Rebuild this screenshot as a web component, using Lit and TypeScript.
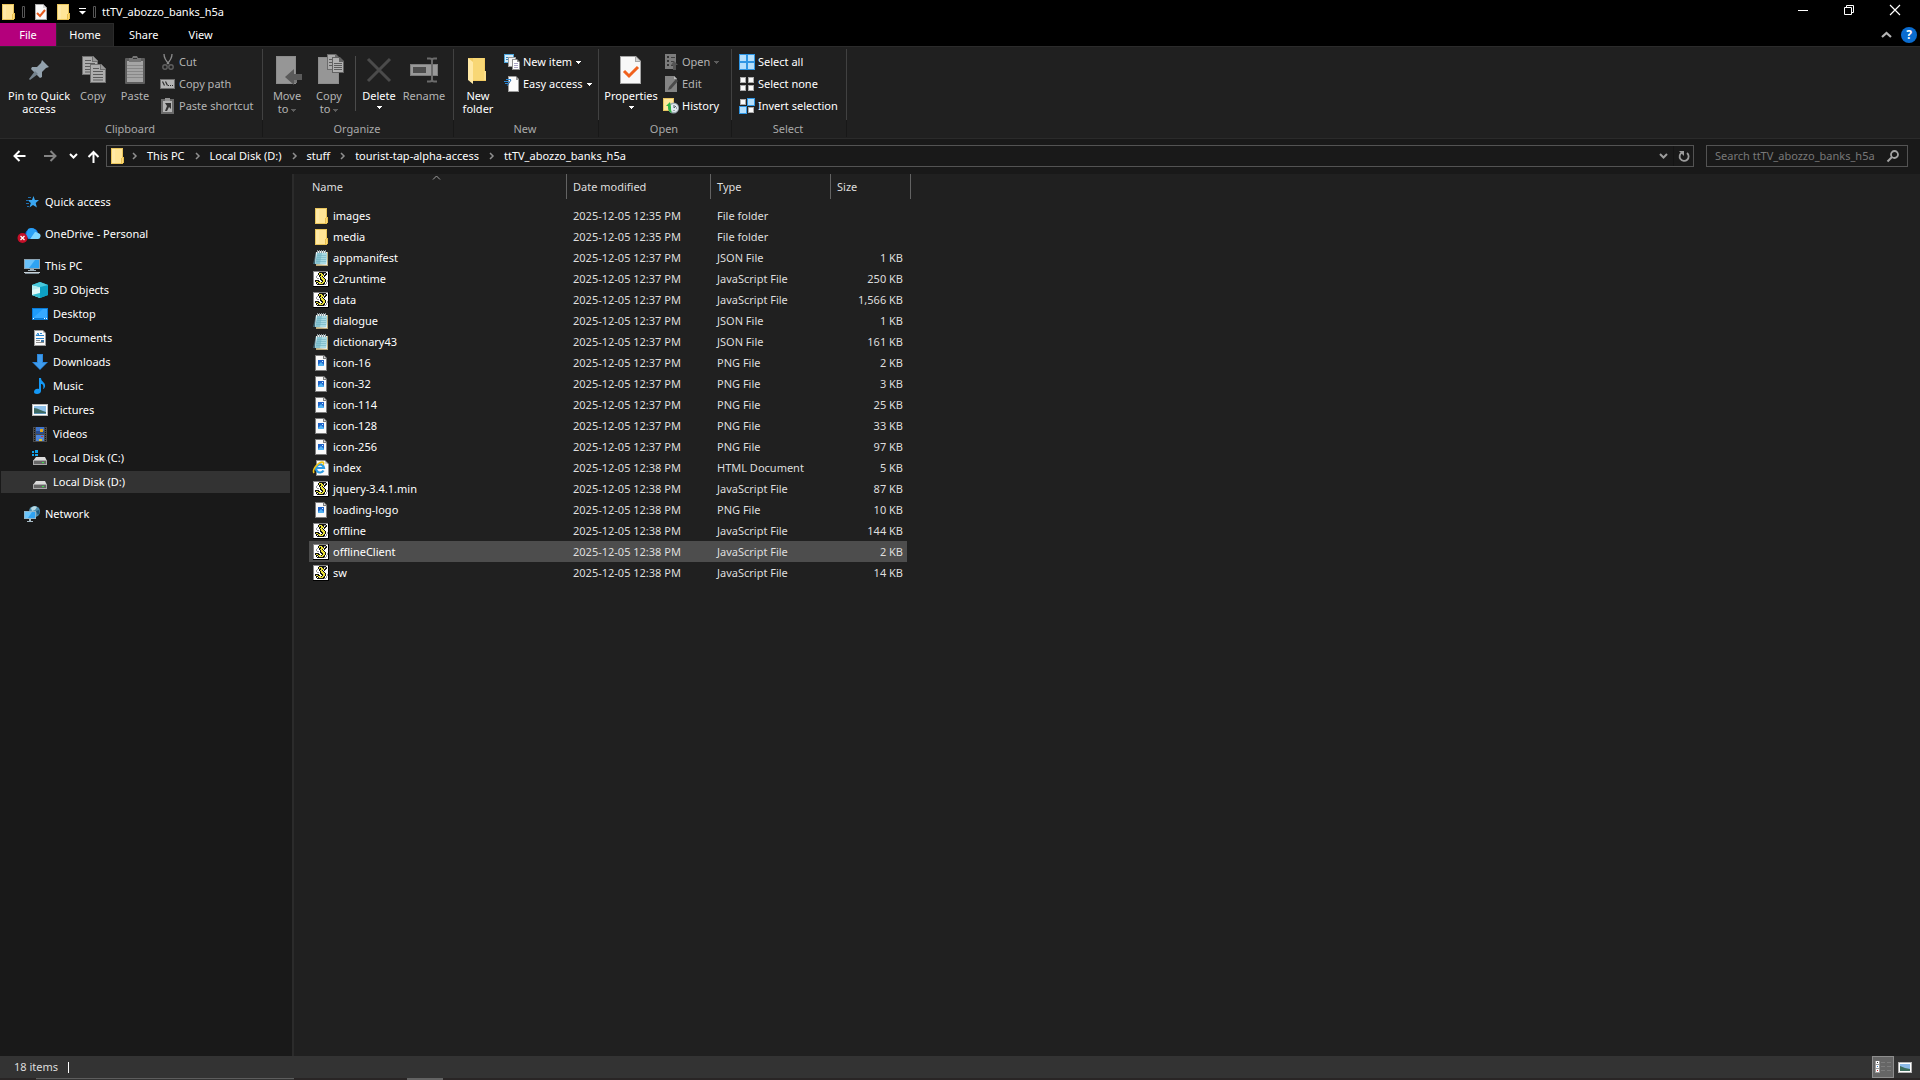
import { LitElement, html, css, svg, nothing, type TemplateResult } from "lit";
import { customElement, state } from "lit/decorators.js";
import { classMap } from "lit/directives/class-map.js";

type Shape = ReturnType<typeof svg>;

const pic = (w: number, h: number, body: Shape) =>
  html`<svg class="pic" width=${w} height=${h} viewBox="0 0 ${w} ${h}" aria-hidden="true">${body}</svg>`;

/* ---------- 16px icons ---------- */

const folder = () => pic(16, 16, svg`
  <rect x="2" y="0" width="12" height="16" fill="#e9c55c"/>
  <rect x="3" y="1" width="10" height="14" fill="#ffe597"/>
  <rect x="3" y="1" width="3" height="14" fill="#ffe9a6"/>
  <path d="M12 10h1v-1h2v6h-1v1h-2z" fill="#e9c04f"/>
  <rect x="13" y="10" width="1" height="5" fill="#fbd978"/>`);

const docCheck = () => pic(16, 16, svg`
  <path d="M2 0h8l4 4v12H2z" fill="#a8a8a8"/>
  <path d="M3 1h7v3h3v11H3z" fill="#f9f9f9"/>
  <path d="M10 0v4h4z" fill="#d5d5d5"/>
  <path d="M4 9l3 3 5-6" fill="none" stroke="#e65a1c" stroke-width="2"/>`);

const notepad = () => pic(16, 16, svg`
  <path d="M3 2L0 14h4z" fill="#3b5e6a"/>
  <path d="M3 2h12v14H3l0-1z" fill="#b9a878"/>
  <path d="M3 2h11v13L2 14z" fill="#e9f4f5"/>
  <path d="M4 3h10l-1 11H2z" fill="#86c3d1"/>
  <path d="M9 3h5l-1 11H7z" fill="#a9dbe4"/>
  <path d="M4 5.500h9M4 7.500h9M3 9.500h10M3 11.500h10" stroke="#6fb2c2" stroke-width="1" opacity=".6"/>
  <path d="M4.500 0v3M6.500 0v3M8.500 0v3M10.500 0v3M12.500 0v3" stroke="#8d9a9e" stroke-width="1"/>
  <path d="M5.500 1v2M7.500 1v2M9.500 1v2M11.500 1v2" stroke="#e5edee" stroke-width="1"/>`);

/* Pixel rows of the script scroll: k black, y yellow, g grey. */
const SCROLL = [
  ".....kkkkkkk..",
  "....kyyykkggk.",
  "....kykyyk.kk.",
  "...g.kkyyykk..",
  "..g..kyyk.k...",
  "..g...kyyk....",
  "...gg.kyyyk...",
  "......kkyyyk..",
  ".kkkk..kkyyk.g",
  ".kyykk..kyyk.g",
  "..kkyyykyyk.g.",
  "..k.kyyyykk.g.",
  "...kkkkkkkgg..",
];
const INK: Record<string, string> = { k: "#111", y: "#e8df3a", g: "#9a9a9a" };
const script = () => pic(16, 16, svg`
  <rect width="16" height="16" fill="#000"/>
  <rect width="15" height="15" fill="#868686"/>
  <rect x="1" y="1" width="14" height="14" fill="#fff"/>
  ${SCROLL.map((row, y) => [...row].map((c, x) => INK[c]
    ? svg`<rect x=${x + 1} y=${y + 1} width="1" height="1" fill=${INK[c]}/>` : nothing))}`);

const image = () => pic(16, 16, svg`
  <path d="M2 0h9l3 3v13H2z" fill="#7c7c7c"/>
  <path d="M3 1h7v3h3v11H3z" fill="#fafafa"/>
  <path d="M11 1v2h2z" fill="#dcdcdc"/>
  <rect x="5" y="5" width="6" height="6" fill="#1d63c9"/>
  <path d="M5 10l3-3 3 3v1H5z" fill="#4fb0f0"/>
  <rect x="9" y="6" width="1" height="1" fill="#d5ecff"/>`);

const browser = () => pic(16, 16, svg`
  <path d="M3 0h9l4 4v12H3z" fill="#8a8a8a"/>
  <path d="M4 1h8v3h3v11H4z" fill="#fafafa"/>
  <path d="M12 1v3h3z" fill="#cfcfcf"/>
  <path d="M10.500 10.500A4 4 0 1 1 11 8H4" fill="none" stroke="#2b9be4" stroke-width="2.200"/>
  <path d="M1 13C-1 10 4 3 9 2c2 0 2 1 1 3" fill="none" stroke="#f0c419" stroke-width="1.600"/>`);

const star = () => pic(16, 16, svg`
  <path d="M9.500 2l1.400 4h4.100l-3.300 3 1.200 4.500-3.900-2.500L5.500 13.500l1.300-4.500L3.500 6H8z" fill="#3aa7f2"/>
  <path d="M4 3.500h3M2 6.500h3M2 9.500h3M3 12.500h2" stroke="#1f6fae" stroke-width="1"/>`);

const cloud = () => pic(22, 16, svg`
  <path d="M9 11a4 4 0 0 1 1-7 6 6 0 0 1 10 3 4 4 0 0 1 0 6H10z" fill="#1469d8"/>
  <path d="M10 3a6 6 0 0 1 9 3l-8 7-3-4z" fill="#2aa0f5"/>
  <path d="M12 13l5-7a4 4 0 0 1 3 1 3 3 0 0 1-1 6z" fill="#7fd6ff"/>
  <circle cx="4.500" cy="12" r="5" fill="#c50f28"/>
  <path d="M2.500 10l4 4m0-4l-4 4" stroke="#fff" stroke-width="1.300"/>`);

const pc = () => pic(16, 16, svg`
  <rect x="0" y="1" width="16" height="10" fill="#8ba4b4"/>
  <rect x="1" y="2" width="14" height="8" fill="#2fa3f3"/>
  <path d="M1 2h10l-6 8H1z" fill="#6ac2fb"/>
  <path d="M6 11h4v1h2v1H4v-1h2z" fill="#9fb0ba"/>
  <rect x="0" y="14" width="16" height="1" fill="#c9d2d8"/>
  <rect x="1" y="15" width="14" height="1" fill="#7c8a93"/>`);

const cube = () => pic(16, 16, svg`
  <path d="M0 3l8-3 8 3v10l-8 3-8-3z" fill="#1fb5cf"/>
  <path d="M0 3l8 2v11l-8-3z" fill="#b5eef2"/>
  <path d="M0 8l8-2v5l-8 2z" fill="#dff8f8"/>
  <path d="M8 5l8-2v10l-8 3z" fill="#0da0c4"/>
  <path d="M0 3l8-3 8 3-8 2z" fill="#49c9dc"/>
  <path d="M0 13l8-2v5z" fill="#31bcd0"/>`);

const desktop = () => pic(16, 16, svg`
  <rect x="0" y="2" width="16" height="12" fill="#0a7bd6"/>
  <rect x="1" y="3" width="14" height="9" fill="#1e9bfa"/>
  <path d="M1 12L11 3h4v9z" fill="#36a9ff"/>
  <path d="M1 12.500h1M12 12.500h1M14 12.500h1" stroke="#fff"/>`);

const documents = () => pic(16, 16, svg`
  <path d="M2 0h9l3 3v13H2z" fill="#9b9b9b"/>
  <path d="M3 1h8v2h2v12H3z" fill="#fafafa"/>
  <path d="M11 1v2h2z" fill="#cfcfcf"/>
  <path d="M4 6l2-3 1 3M4 5.500h8M8 3.500h2" stroke="#2583cf" fill="none"/>
  <path d="M4 8.500h8" stroke="#2583cf"/>
  <path d="M4 10.500h4M4 12.500h8" stroke="#8d8d8d"/>
  <rect x="9" y="10" width="3" height="2" fill="#3c78a8"/>`);

const downloads = () => pic(16, 16, svg`
  <path d="M5 0h6v8h5l-8 8-8-8h5z" fill="#2b86dc"/>
  <path d="M6 1h4v8h4l-6 6-6-6h4z" fill="#3f9bec"/>`);

const music = () => pic(16, 16, svg`
  <path d="M7 0h2c0 4 5 4 4 9-1 1-1 2-2 2 1-3 0-5-2-5v7c0 2-2 3-4 3s-3-1-3-2c0-2 2-4 5-3z" fill="#1498f5"/>`);

const pictures = () => pic(16, 16, svg`
  <rect x="0" y="2" width="16" height="12" fill="#b9b9b9"/>
  <rect x="1" y="3" width="14" height="10" fill="#fff"/>
  <rect x="2" y="4" width="12" height="8" fill="#8fc1ea"/>
  <path d="M2 6c4 0 8 3 12 4v2H2z" fill="#3d6a63"/>
  <path d="M2 11h12v1H2z" fill="#5d93b5"/>`);

const videos = () => pic(16, 16, svg`
  <rect x="1" y="1" width="14" height="15" fill="#4b4b4b"/>
  <path d="M2.500 2v13M13.500 2v13" stroke="#141414" stroke-dasharray="1 1"/>
  <rect x="4" y="1" width="8" height="7" fill="#3f74c9"/>
  <path d="M4 5h8v3H4z" fill="#284c8f"/>
  <rect x="8" y="3" width="3" height="3" fill="#e0a91c"/>
  <rect x="4" y="9" width="8" height="6" fill="#4d86db"/>
  <rect x="9" y="10" width="2" height="1" fill="#d03434"/>
  <rect x="7" y="13" width="3" height="2" fill="#e0c233"/>`);

const driveBody = svg`
  <path d="M4 7h9l2 4H1z" fill="#dcdcdc"/>
  <rect x="1" y="10" width="14" height="5" fill="#a9a9a9"/>
  <rect x="2" y="11" width="12" height="3" fill="#666"/>
  <rect x="10" y="12" width="2" height="1" fill="#3fe04a"/>`;
const drive = () => pic(16, 16, driveBody);
const systemDrive = () => pic(16, 16, svg`${driveBody}
  <path d="M0 1h2v2H0zM3 0h3v3H3zM0 4h2v2H0zM3 4h3v2H3z" fill="#12a5f0"/>`);

const network = () => pic(16, 16, svg`
  <circle cx="10.500" cy="5.500" r="5.500" fill="#4f8fb0"/>
  <path d="M7 2c2-2 5-2 6-1l-2 3-3 1z" fill="#b9dbe4"/>
  <path d="M12 5l3-1c1 2 0 4-1 5z" fill="#1d5a80"/>
  <rect x="0" y="5" width="12" height="8" fill="#8fb6cc"/>
  <rect x="1" y="6" width="10" height="6" fill="#2fa3f3"/>
  <path d="M1 6h7l-4 6H1z" fill="#6cc5fb"/>
  <path d="M5 13h2v2h2v1H3v-1h2z" fill="#a9bcc6"/>`);

const cut = () => pic(16, 16, svg`
  <path d="M4 0c0 4 2 7 5 10M12 0c0 4-2 7-5 10" fill="none" stroke="#8b8b8b" stroke-width="1.300"/>
  <circle cx="5" cy="13" r="2.200" fill="none" stroke="#5f5f5f" stroke-width="1.400"/>
  <circle cx="11" cy="13" r="2.200" fill="none" stroke="#5f5f5f" stroke-width="1.400"/>`);

const copyPath = () => pic(16, 16, svg`
  <rect x="0" y="3" width="15" height="10" fill="#6f6f6f"/>
  <rect x="1" y="4" width="13" height="8" fill="#b4b4b4"/>
  <path d="M2.500 5.500l2 4M5.500 5.500l2 4" stroke="#2c2c2c" stroke-width="1.200"/>
  <path d="M8 9.500h1M10 9.500h1M12 9.500h1" stroke="#2c2c2c"/>`);

const pasteShortcut = () => pic(16, 16, svg`
  <rect x="1" y="1" width="13" height="15" fill="#6a6a6a"/>
  <rect x="3" y="3" width="9" height="11" fill="#b4b4b4"/>
  <rect x="5" y="0" width="5" height="3" fill="#939393"/>
  <path d="M5 5h6v6L9 9l-2 4H5l2-5z" fill="#333"/>`);

const newItem = () => pic(16, 16, svg`
  <rect x="0" y="0" width="10" height="9" fill="#4ea6dc"/>
  <rect x="1" y="1" width="8" height="7" fill="#d5ecfa"/>
  <path d="M2 3.500h6M2 5.500h3" stroke="#2f82bd"/>
  <rect x="4" y="3" width="8" height="10" fill="#9b9b9b"/>
  <rect x="5" y="4" width="6" height="8" fill="#f3f3f3"/>
  <path d="M8 5h5l3 3v8H8z" fill="#8f8f8f"/>
  <path d="M9 6h4v2h2v7H9z" fill="#fff"/>
  <path d="M10 9.500h4M10 11.500h4M10 13.500h4" stroke="#aaa3c5"/>`);

const easyAccess = () => pic(16, 16, svg`
  <path d="M4 0h8l3 3v13H4z" fill="#9a9a9a"/>
  <path d="M5 1h7v3h2v11H5z" fill="#fbfbfb"/>
  <path d="M2 3.500h5M0 5.500h5M1 7.500h3" stroke="#2b86d3"/>
  <path d="M7 4L3 10" stroke="#1d5f9c"/>`);

const openIcon = () => pic(16, 16, svg`
  <rect x="2" y="0" width="11" height="15" fill="#7c7c7c"/>
  <path d="M4 2h2v2H4zM4 6h2v2H4zM4 10h2v2H4z" fill="#343434"/>
  <path d="M8 3.500h4M8 7.500h3M8 11.500h2" stroke="#404040"/>
  <path d="M11 7l4 4h-2v5h-3v-5H8z" fill="#555"/>`);

const edit = () => pic(16, 16, svg`
  <path d="M2 0h9l3 3v13H2z" fill="#848484"/>
  <path d="M11 0v3h3z" fill="#bcbcbc"/>
  <path d="M5 14l1-3 7-8 2 2-7 8z" fill="#4b4b4b"/>`);

const history = () => pic(16, 16, svg`
  <rect x="0" y="0" width="11" height="13" fill="#e7c45f"/>
  <rect x="1" y="1" width="9" height="11" fill="#ffe79c"/>
  <circle cx="10.500" cy="10" r="5.500" fill="#9eaab4"/>
  <circle cx="11" cy="10" r="4" fill="#e4ebf0"/>
  <path d="M11 7v3l2-2M11 13v-1M14 10h-1" stroke="#54606a" fill="none"/>
  <path d="M7 4L3 8h2c0 4 1 6 4 7-1-2-1-4-1-6z" fill="#2fb543"/>`);

const square = (x: number, y: number, on: boolean) => on
  ? svg`<rect x=${x} y=${y} width="8" height="8" fill="#2f96e4"/><rect x=${x + 1} y=${y + 1} width="6" height="6" fill="#b5dffc"/>`
  : svg`<rect x=${x + 1} y=${y + 1} width="6" height="6" fill="#aaa"/><rect x=${x + 2} y=${y + 2} width="4" height="4" fill="#fafafa"/>`;
const squares = (a: boolean, b: boolean, c: boolean, d: boolean) =>
  pic(16, 16, svg`${square(0, 0, a)}${square(8, 0, b)}${square(0, 8, c)}${square(8, 8, d)}`);

/* ---------- large ribbon icons ---------- */

const pinBig = () => pic(28, 28, svg`
  <path d="M17 4l7 7-3 1-4 4v5l-2 1-9-9 1-2h5l4-4z" fill="#93a2ae"/>
  <path d="M10 15l3 3-8 6-1-1z" fill="#74828d"/>`);

const page = (x: number, y: number) => svg`
  <path d="M${x} ${y}h11l5 5v14h-16z" fill="#707070"/>
  <path d="M${x + 1} ${y + 1}h9v5h5v12h-14z" fill="#adadad"/>
  <path d="M${x + 11} ${y}v5h5z" fill="#989898"/>
  <path d="M${x + 3} ${y + 4.5}h6M${x + 3} ${y + 7.5}h10M${x + 3} ${y + 10.5}h10M${x + 3} ${y + 13.5}h10M${x + 3} ${y + 16}h10" stroke="#5b5b5b"/>`;
const copyBig = () => pic(28, 28, svg`${page(3, 0)}${page(11, 8)}`);

const pasteBig = () => pic(28, 28, svg`
  <rect x="4" y="2" width="20" height="26" rx="1" fill="#5e5e5e"/>
  <rect x="6" y="5" width="16" height="21" fill="#a5a5a5"/>
  <path d="M6 9.500h16M6 12.500h16M6 15.500h16M6 18.500h16M6 21.500h16" stroke="#888"/>
  <path d="M8 2h3l1-2h4l1 2h3v4H8z" fill="#757575"/>
  <rect x="12" y="2" width="4" height="1" fill="#333"/>`);

const moveBig = () => pic(28, 28, svg`
  <path d="M3 0h20v28H3z" fill="#8c8c8c"/>
  <path d="M4 1h18v26H4z" fill="#969696"/>
  <path d="M21 22h3v5h-3z" fill="#777"/>
  <path d="M12 21l9-8v5h8v6h-8v5z" fill="#5a5a5a"/>`);

const copyToBig = () => pic(28, 28, svg`
  <path d="M3 1h21v27H3z" fill="#8c8c8c"/>
  <path d="M4 2h19v25H4z" fill="#969696"/>
  <path d="M12-2h9l3 3v13H12z" fill="#6b6b6b"/>
  <path d="M13-1h7v3h3v11H13z" fill="#aaa"/>
  <path d="M17 1h8l4 4v12H17z" fill="#626262"/>
  <path d="M18 2h6v4h4v10H18z" fill="#b0b0b0"/>
  <path d="M19 7.500h8M19 9.500h8M19 11.500h8M19 13.500h8M14 3.500h3M14 6.500h3M14 9.500h3" stroke="#5b5b5b"/>`);

const deleteBig = () => pic(28, 28, svg`
  <path d="M3 3l22 22M25 3L3 25" stroke="#4b4b4b" stroke-width="3" fill="none"/>`);

const renameBig = () => pic(28, 28, svg`
  <rect x="0" y="8" width="28" height="12" fill="#7d7d7d"/>
  <rect x="1" y="9" width="26" height="10" fill="#999"/>
  <rect x="3" y="11" width="13" height="6" fill="#4d4d4d"/>
  <path d="M17 2.500h3q2 0 2 2v19q0 2-2 2h-3M27 2.500h-3q-2 0-2 2M27 25.500h-3q-2 0-2-2" fill="none" stroke="#6b6b6b" stroke-width="2"/>`);

const newFolderBig = () => pic(28, 28, svg`
  <path d="M4 2h17v14l1 1v8H9z" fill="#f3cc62"/>
  <path d="M4 2l5 4v22l-5-4z" fill="#ffe9a6"/>
  <path d="M9 6V2h11v22H9z" fill="#f8d775"/>
  <path d="M20 15h2v9h-2z" fill="#fadf8c"/>`);

const propertiesBig = () => pic(28, 28, svg`
  <path d="M3 0h16l5 5v23H3z" fill="#a5a5a5"/>
  <path d="M4 1h14v5h5v21H4z" fill="#f8f8f8"/>
  <path d="M19 1v4h4z" fill="#d2d2d2"/>
  <path d="M7 15l5 5 9-9" fill="none" stroke="#f0611d" stroke-width="3"/>`);

/* ---------- chrome glyphs ---------- */

const drop = () => pic(5, 3, svg`<path d="M0 0h5v1H4v1H3v1H2V2H1V1H0z" fill="currentColor"/>`);
const chevron = () => pic(5, 8, svg`<path d="M1 1l3 3-3 3" fill="none" stroke="#8f8f8f" stroke-width="1.500"/>`);
const caretDown = () => pic(9, 6, svg`<path d="M1 1l3.500 3.500L8 1" fill="none" stroke="currentColor" stroke-width="2"/>`);
const caretUp = () => pic(11, 7, svg`<path d="M1 6l4.500-4L10 6" fill="none" stroke="currentColor" stroke-width="2.200"/>`);
const sortUp = () => pic(9, 5, svg`<path d="M1 4.500L4.500 1 8 4.500" fill="none" stroke="#a0a0a0"/>`);
const backArrow = () => pic(13, 12, svg`<path d="M12.500 6H2M6.500 1L1.500 6l5 5" fill="none" stroke="currentColor" stroke-width="2"/>`);
const nextArrow = () => pic(13, 12, svg`<path d="M0 6h11M6.500 1l5 5-5 5" fill="none" stroke="currentColor" stroke-width="2"/>`);
const upArrow = () => pic(13, 13, svg`<path d="M6.500 13V2M1.500 7l5-5 5 5" fill="none" stroke="currentColor" stroke-width="2"/>`);
const toolMark = () => pic(3, 12, svg`<path d="M.5.500h2v11h-2z" fill="none" stroke="#565656"/>`);

interface NavItem { label: string; icon: () => TemplateResult; child?: boolean; gap?: boolean }
interface FileItem { name: string; icon: () => TemplateResult; date: string; type: string; size: string }

const NAV: NavItem[] = [
  { label: "Quick access", icon: star },
  { label: "OneDrive - Personal", icon: cloud, gap: true },
  { label: "This PC", icon: pc, gap: true },
  { label: "3D Objects", icon: cube, child: true },
  { label: "Desktop", icon: desktop, child: true },
  { label: "Documents", icon: documents, child: true },
  { label: "Downloads", icon: downloads, child: true },
  { label: "Music", icon: music, child: true },
  { label: "Pictures", icon: pictures, child: true },
  { label: "Videos", icon: videos, child: true },
  { label: "Local Disk (C:)", icon: systemDrive, child: true },
  { label: "Local Disk (D:)", icon: drive, child: true },
  { label: "Network", icon: network, gap: true },
];

const entry = (name: string, kind: string, minute: number, size = ""): FileItem => {
  const kinds: Record<string, [() => TemplateResult, string]> = {
    dir: [folder, "File folder"],
    json: [notepad, "JSON File"],
    js: [script, "JavaScript File"],
    png: [image, "PNG File"],
    html: [browser, "HTML Document"],
  };
  const [icon, type] = kinds[kind];
  return { name, icon, type, date: `2025-12-05 12:${minute} PM`, size };
};

const FILES: FileItem[] = [
  entry("images", "dir", 35),
  entry("media", "dir", 35),
  entry("appmanifest", "json", 37, "1 KB"),
  entry("c2runtime", "js", 37, "250 KB"),
  entry("data", "js", 37, "1,566 KB"),
  entry("dialogue", "json", 37, "1 KB"),
  entry("dictionary43", "json", 37, "161 KB"),
  entry("icon-16", "png", 37, "2 KB"),
  entry("icon-32", "png", 37, "3 KB"),
  entry("icon-114", "png", 37, "25 KB"),
  entry("icon-128", "png", 37, "33 KB"),
  entry("icon-256", "png", 37, "97 KB"),
  entry("index", "html", 38, "5 KB"),
  entry("jquery-3.4.1.min", "js", 38, "87 KB"),
  entry("loading-logo", "png", 38, "10 KB"),
  entry("offline", "js", 38, "144 KB"),
  entry("offlineClient", "js", 38, "2 KB"),
  entry("sw", "js", 38, "14 KB"),
];

const PATH = ["This PC", "Local Disk (D:)", "stuff", "tourist-tap-alpha-access", "ttTV_abozzo_banks_h5a"];

@customElement("app-root")
export class AppRoot extends LitElement {
  @state() private place = "Local Disk (D:)";
  @state() private current = "offlineClient";

  static styles = css`
    :host {
      display: flex;
      flex-direction: column;
      min-height: 100vh;
      box-sizing: border-box;
      background: #202020;
      color: #fff;
      font: 11px/16px "Noto Sans", "Open Sans", sans-serif;
      cursor: default;
    }
    *, *::before, *::after { box-sizing: border-box; }
    button {
      display: flex;
      align-items: center;
      justify-content: center;
      margin: 0;
      padding: 0;
      border: 0;
      background: none;
      color: inherit;
      font: inherit;
      white-space: nowrap;
    }
    .pic { display: block; flex: none; overflow: visible; }

    .title { display: flex; align-items: center; height: 23px; background: #000; }
    .tools { display: flex; align-items: center; gap: 6px; }
    .tools .doc { padding: 0 0 0 2px; }
    .tools .more { flex-direction: column; width: 10px; }
    .title h1 { flex: 1; margin: 0; padding-left: 6px; font: inherit; }
    .window { display: flex; align-self: stretch; padding-right: 2px; }
    .window button { width: 46px; padding-bottom: 3px; }

    .tabs { display: flex; height: 23px; background: #000; }
    .tab { padding: 0 15px; }
    .tab.file { width: 56px; background: #b4007c; }
    .tab.home { width: 58px; border: 1px solid #2b2b2b; border-bottom: 0; background: #202020; }
    .tabend { display: flex; gap: 9px; align-items: center; margin-left: auto; padding-right: 3px; color: #b5b5b5; }
    .help {
      width: 16px;
      height: 16px;
      border-radius: 50%;
      background: #0a6cd0;
      color: #fff;
      font-size: 12px;
      font-weight: 700;
    }

    .ribbon {
      display: flex;
      border-top: 1px solid #2b2b2b;
      border-bottom: 1px solid #2b2b2b;
      padding: 2px 0 1px;
    }
    .group {
      display: flex;
      flex-direction: column;
      padding-right: 1px;
      background: linear-gradient(#414141 71px, #181818 71px) right / 1px 100% no-repeat;
    }
    .cmds { display: flex; height: 71px; padding: 2px 2px 0; }
    .group h2 { margin: 0; padding: 1px 2px 0 0; color: #a9a9a9; font: inherit; text-align: center; }
    .clip { width: 263px; }
    .clip .cmds { padding-left: 6px; }
    .organize { width: 191px; }
    .organize .cmds { padding-left: 3px; }
    .new { width: 145px; }
    .open { width: 133px; }
    .select { width: 115px; }
    .select .cmds { padding-left: 5px; }
    .big {
      flex-direction: column;
      justify-content: flex-start;
      min-width: 42px;
      padding-top: 5px;
      line-height: 13px;
    }
    .big .text { padding-top: 5px; text-align: center; white-space: pre; }
    .big .text .pic { display: inline-block; vertical-align: middle; }
    .big > .pic + .text + .pic { margin-top: 4px; }
    .pin { width: 66px; }
    .props { width: 60px; }
    .rename { width: 48px; }
    .new .big { width: 44px; }
    .off { color: #b4b4b4; }
    .off .text .pic { color: #5c5c5c; }
    .rule { flex: none; width: 1px; height: 55px; margin: 5px 2px 0 5px; background: #4b4b4b; }
    .smalls { display: flex; flex-direction: column; align-items: flex-start; padding-left: 4px; }
    .open .smalls, .select .smalls { padding-left: 2px; }
    .small { gap: 3px; height: 22px; }
    .small .pic:last-child { margin-left: 1px; }
    .small.off .pic:last-child { color: #5c5c5c; }

    .nav { display: flex; gap: 12px; padding: 6px 12px 7px; background: #191919; }
    .arrows { display: flex; align-items: center; gap: 9px; width: 82px; }
    .arrows button:nth-child(1) { margin: 0 9px 0 1px; }
    .arrows button:nth-child(2) { margin-right: 3px; color: #848484; }
    .address {
      display: flex;
      flex: 1;
      align-items: center;
      height: 22px;
      border: 1px solid #535353;
      padding-left: 2px;
    }
    .crumbs { display: flex; flex: 1; align-items: center; margin: 0; padding: 0; list-style: none; }
    .crumbs li { display: flex; align-items: center; }
    .crumbs .pic { margin: 0 10px; }
    .crumbs li:first-child .pic { margin-left: 7px; }
    .address > button { width: 20px; height: 20px; color: #9c9c9c; }
    .address > button + button { border-left: 1px solid #141414; }
    .search { display: flex; align-items: center; width: 202px; height: 22px; border: 1px solid #535353; padding: 0 8px; }
    .search input {
      flex: 1;
      min-width: 0;
      padding: 0;
      border: 0;
      outline: 0;
      background: none;
      color: #fff;
      font: inherit;
    }
    .search input::placeholder { color: #787878; opacity: 1; }

    .body { display: flex; flex: 1; }
    .tree { width: 294px; border-right: 2px solid #2b2b2b; padding: 16px 2px 16px 1px; background: #191919; }
    .tree ul { margin: 0; padding: 0; list-style: none; }
    .tree li { padding: 1px 0; }
    .tree li.gap { padding-top: 9px; }
    .tree a {
      display: flex;
      align-items: center;
      height: 22px;
      padding-left: 23px;
      gap: 5px;
      color: #fff;
      text-decoration: none;
    }
    .tree a.child { padding-left: 31px; }
    .tree a.cur { background: #333; }
    .tree .slot { display: flex; justify-content: flex-end; width: 16px; }

    .files { flex: 1; padding-left: 15px; }
    table { width: 602px; table-layout: fixed; border-spacing: 0; }
    .c-date { width: 144px; }
    .c-type { width: 120px; }
    .c-size { width: 80px; }
    th { position: relative; height: 31px; padding: 0 0 6px; color: #dedede; font-weight: 400; text-align: left; vertical-align: top; }
    .head { height: 25px; border-right: 1px solid #636363; padding-left: 6px; line-height: 25px; }
    th:first-child .head { padding-left: 3px; }
    .sort { position: absolute; top: 1px; left: 50%; margin-left: -6px; }
    td { height: 21px; padding: 0 0 0 6px; color: #dedede; white-space: nowrap; }
    td:first-child { padding-left: 4px; color: #fff; }
    td:last-child { border-right: 4px solid transparent; padding-right: 4px; background-clip: padding-box; text-align: right; }
    tr.cur td { background-color: #4d4d4d; }
    .name { display: flex; align-items: center; gap: 4px; }

    .status { display: flex; align-items: center; height: 22px; padding: 0 4px 0 14px; background: #333; color: #dedede; }
    .status .bar { width: 1px; height: 11px; margin: 0 auto 0 10px; background: #fff; }
    .status button { width: 22px; height: 22px; }
    .status .on { border: 1px solid #8d8d8d; background: #666; }
    .strip { display: flex; height: 2px; padding: 0 4px 0 36px; background: #292525; }
    .strip i { width: 258px; border-top: 1px solid #5d5d5d; background: #333; }
    .strip i + i { width: 36px; margin-left: 113px; border: 0; background: #636363; }
  `;

  private big(label: string, icon: () => TemplateResult, cls = "", arrow = false) {
    const inline = arrow && label.includes("\n");
    return html`<button class="big ${cls}">${icon()}<span class="text">${label}${inline ? html` ${drop()}` : nothing}</span>${arrow && !inline ? drop() : nothing}</button>`;
  }

  private small(label: string, icon: () => TemplateResult, off = false, arrow = false) {
    return html`<button class=${classMap({ small: true, off })}>${icon()}<span>${label}</span>${arrow ? drop() : nothing}</button>`;
  }

  private renderTitle() {
    return html`
      <header class="title">
        <div class="tools">
          ${folder()}${toolMark()}
          <button class="doc" aria-label="Properties">${docCheck()}</button>
          <button aria-label="New folder">${folder()}</button>
          <button class="more" aria-label="Customize Quick Access Toolbar">
            ${pic(7, 7, svg`<path d="M0 .5h7" stroke="#fff"/><path d="M0 3h7L3.500 6.500z" fill="#fff"/>`)}
          </button>
          ${toolMark()}
        </div>
        <h1>ttTV_abozzo_banks_h5a</h1>
        <div class="window">
          <button aria-label="Minimize">${pic(10, 10, svg`<path d="M0 5.500h10" stroke="#fff"/>`)}</button>
          <button aria-label="Restore">${pic(10, 10, svg`<path d="M.5 2.500h7v7h-7zM2.500 2.500v-2h7v7h-2" fill="none" stroke="#fff"/>`)}</button>
          <button aria-label="Close">${pic(10, 10, svg`<path d="M0 0l10 10M10 0L0 10" stroke="#fff" stroke-width="1.200"/>`)}</button>
        </div>
      </header>
      <div class="tabs">
        <button class="tab file">File</button>
        <button class="tab home">Home</button>
        <button class="tab">Share</button>
        <button class="tab">View</button>
        <div class="tabend">
          <button aria-label="Minimize the Ribbon">${caretUp()}</button>
          <button class="help" aria-label="Help">?</button>
        </div>
      </div>`;
  }

  private renderRibbon() {
    return html`
      <div class="ribbon">
        <section class="group clip">
          <div class="cmds">
            ${this.big("Pin to Quick\naccess", pinBig, "pin")}
            ${this.big("Copy", copyBig, "off")}
            ${this.big("Paste", pasteBig, "off")}
            <div class="smalls">
              ${this.small("Cut", cut, true)}
              ${this.small("Copy path", copyPath, true)}
              ${this.small("Paste shortcut", pasteShortcut, true)}
            </div>
          </div>
          <h2>Clipboard</h2>
        </section>
        <section class="group organize">
          <div class="cmds">
            ${this.big("Move\nto", moveBig, "off", true)}
            ${this.big("Copy\nto", copyToBig, "off", true)}
            <div class="rule"></div>
            ${this.big("Delete", deleteBig, "", true)}
            ${this.big("Rename", renameBig, "off rename")}
          </div>
          <h2>Organize</h2>
        </section>
        <section class="group new">
          <div class="cmds">
            ${this.big("New\nfolder", newFolderBig)}
            <div class="smalls">
              ${this.small("New item", newItem, false, true)}
              ${this.small("Easy access", easyAccess, false, true)}
            </div>
          </div>
          <h2>New</h2>
        </section>
        <section class="group open">
          <div class="cmds">
            ${this.big("Properties", propertiesBig, "props", true)}
            <div class="smalls">
              ${this.small("Open", openIcon, true, true)}
              ${this.small("Edit", edit, true)}
              ${this.small("History", history)}
            </div>
          </div>
          <h2>Open</h2>
        </section>
        <section class="group select">
          <div class="cmds">
            <div class="smalls">
              ${this.small("Select all", () => squares(true, true, true, true))}
              ${this.small("Select none", () => squares(false, false, false, false))}
              ${this.small("Invert selection", () => squares(false, true, true, false))}
            </div>
          </div>
          <h2>Select</h2>
        </section>
      </div>`;
  }

  private renderNav() {
    return html`
      <div class="nav">
        <div class="arrows">
          <button aria-label="Back">${backArrow()}</button>
          <button aria-label="Forward">${nextArrow()}</button>
          <button aria-label="Recent locations">${caretDown()}</button>
          <button aria-label="Up">${upArrow()}</button>
        </div>
        <div class="address">
          ${folder()}
          <ol class="crumbs">
            ${PATH.map((part) => html`<li>${chevron()}<button>${part}</button></li>`)}
          </ol>
          <button aria-label="Previous locations">${caretDown()}</button>
          <button aria-label="Refresh">
            ${pic(12, 12, svg`<path d="M4 2.500A4.500 4.500 0 1 0 9 3" fill="none" stroke="currentColor" stroke-width="1.800"/><path d="M1 1h5v5z" fill="currentColor"/>`)}
          </button>
        </div>
        <label class="search">
          <input type="text" aria-label="Search" placeholder="Search ttTV_abozzo_banks_h5a" />
          ${pic(12, 12, svg`<circle cx="7.500" cy="4.500" r="3.500" fill="none" stroke="#a5a5a5" stroke-width="1.800"/><path d="M5 7L.500 11.500" stroke="#a5a5a5" stroke-width="2"/>`)}
        </label>
      </div>`;
  }

  private renderTree() {
    return html`
      <nav class="tree">
        <ul>
          ${NAV.map((n) => html`
            <li class=${classMap({ gap: !!n.gap })}>
              <a href="#" class=${classMap({ child: !!n.child, cur: n.label === this.place })}
                @click=${(e: Event) => { e.preventDefault(); this.place = n.label; }}>
                <span class="slot">${n.icon()}</span>${n.label}
              </a>
            </li>`)}
        </ul>
      </nav>`;
  }

  private renderFiles() {
    return html`
      <main class="files">
        <table>
          <colgroup><col /><col class="c-date" /><col class="c-type" /><col class="c-size" /></colgroup>
          <thead>
            <tr>
              <th><div class="head">Name</div><span class="sort">${sortUp()}</span></th>
              <th><div class="head">Date modified</div></th>
              <th><div class="head">Type</div></th>
              <th><div class="head">Size</div></th>
            </tr>
          </thead>
          <tbody>
            ${FILES.map((f) => html`
              <tr class=${classMap({ cur: f.name === this.current })} @mouseenter=${() => (this.current = f.name)}>
                <td><div class="name">${f.icon()}${f.name}</div></td>
                <td>${f.date}</td>
                <td>${f.type}</td>
                <td>${f.size}</td>
              </tr>`)}
          </tbody>
        </table>
      </main>`;
  }

  render() {
    return html`
      ${this.renderTitle()} ${this.renderRibbon()} ${this.renderNav()}
      <div class="body">${this.renderTree()} ${this.renderFiles()}</div>
      <footer class="status">
        <span>${FILES.length} items</span><span class="bar"></span>
        <button class="on" aria-label="Details view">
          ${pic(16, 12, svg`
            <path d="M0 0h5v12H0z" fill="#9c9c9c"/>
            <path d="M1 0h3v3H1zM1 4h3v3H1zM1 8h3v3H1z" fill="#fff"/>
            <path d="M2 1h1v1H2z" fill="#333"/><path d="M2 5h1v1H2z" fill="#2b7fd0"/><path d="M2 9h1v1H2z" fill="#c22"/>
            <path d="M6 1.500h4M12 1.500h4M6 5.500h4M12 5.500h4M6 9.500h4M12 9.500h4" stroke="#7c7c7c"/>`)}
        </button>
        <button aria-label="Large icons view">
          ${pic(14, 11, svg`
            <rect width="14" height="11" fill="#b5b5b5"/><rect x="1" y="1" width="12" height="9" fill="#fff"/>
            <rect x="2" y="2" width="10" height="7" fill="#8dbbe8"/><path d="M2 4l5 2 5 1v2H2z" fill="#3c6d5b"/>`)}
        </button>
      </footer>
      <div class="strip"><i></i><i></i></div>`;
  }
}
